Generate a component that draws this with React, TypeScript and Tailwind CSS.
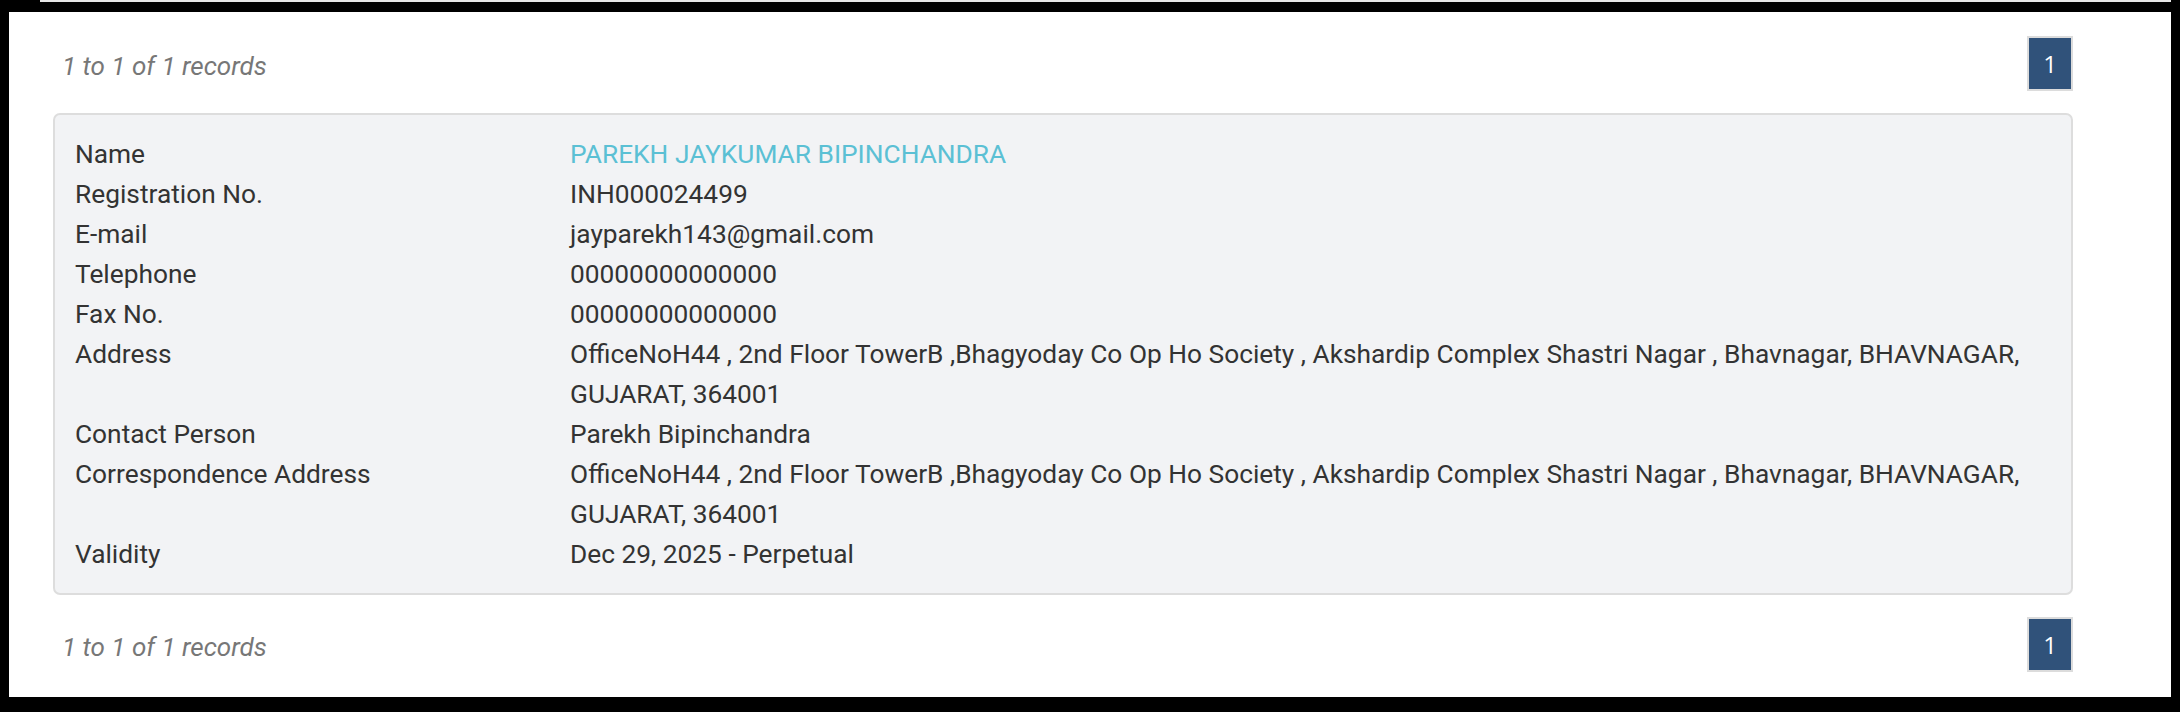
const rows: { label: string; value: string; link?: boolean }[] = [
  { label: "Name", value: "PAREKH JAYKUMAR BIPINCHANDRA", link: true },
  { label: "Registration No.", value: "INH000024499" },
  { label: "E-mail", value: "jayparekh143@gmail.com" },
  { label: "Telephone", value: "00000000000000" },
  { label: "Fax No.", value: "00000000000000" },
  {
    label: "Address",
    value:
      "OfficeNoH44 , 2nd Floor TowerB ,Bhagyoday Co Op Ho Society , Akshardip Complex Shastri Nagar , Bhavnagar, BHAVNAGAR, GUJARAT, 364001",
  },
  { label: "Contact Person", value: "Parekh Bipinchandra" },
  {
    label: "Correspondence Address",
    value:
      "OfficeNoH44 , 2nd Floor TowerB ,Bhagyoday Co Op Ho Society , Akshardip Complex Shastri Nagar , Bhavnagar, BHAVNAGAR, GUJARAT, 364001",
  },
  { label: "Validity", value: "Dec 29, 2025 - Perpetual" },
];

function Pager() {
  return (
    <div className="flex items-center justify-between">
      <span className="pl-[9px] pt-[5px] text-[26px] leading-[40px] italic text-[#777777]">
        1 to 1 of 1 records
      </span>
      <span className="w-[46px] h-[55px] flex items-center justify-center bg-[#30527a] border-2 border-[#dcdcdc] text-white text-[24px] font-['Open_Sans',sans-serif]">
        1
      </span>
    </div>
  );
}

export default function App() {
  return (
    <div className="w-[2180px] h-[712px] bg-black flex flex-col pl-[9px] pr-[9px] pb-[15px] font-['Roboto',sans-serif]">
      <div className="h-[2px] ml-[31px] bg-[#e6e6e6]" />
      <div className="h-[10px]" />
      <div className="flex-1 bg-white pl-[44px] pr-[98px] pt-[24px] flex flex-col gap-[22px]">
        <Pager />
        <div className="bg-[#f2f3f5] border-2 border-[#dddddd] rounded-[7px] pt-[19px] pb-[19px] pl-[20px] pr-[20px] text-[26.3px] leading-[40px] text-[#333333]">
          {rows.map((r) => (
            <div key={r.label} className="flex">
              <div className="w-[495px] shrink-0">{r.label}</div>
              <div className={r.link ? "flex-1 text-[#5bc0d4]" : "flex-1"}>{r.value}</div>
            </div>
          ))}
        </div>
        <Pager />
      </div>
    </div>
  );
}
